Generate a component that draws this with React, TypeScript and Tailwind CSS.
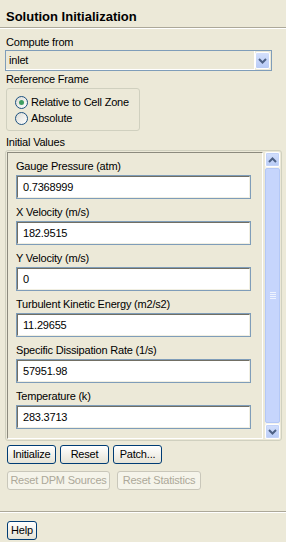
import React from 'react';

const fields = [
  { label: 'Gauge Pressure (atm)', value: '0.7368999' },
  { label: 'X Velocity (m/s)', value: '182.9515' },
  { label: 'Y Velocity (m/s)', value: '0' },
  { label: 'Turbulent Kinetic Energy (m2/s2)', value: '11.29655' },
  { label: 'Specific Dissipation Rate (1/s)', value: '57951.98' },
  { label: 'Temperature (k)', value: '283.3713' },
];

function Chevron({ up = false }: { up?: boolean }) {
  return (
    <svg width="9" height="6" viewBox="0 0 9 6">
      <path
        d={up ? 'M1 5 L4.5 1.5 L8 5' : 'M1 1 L4.5 4.5 L8 1'}
        fill="none"
        stroke="#4d6185"
        strokeWidth="2"
      />
    </svg>
  );
}

function ArrowButton({ up = false }: { up?: boolean }) {
  return (
    <div className="flex h-[15px] w-[15px] items-center justify-center rounded-[2px] border border-white bg-gradient-to-b from-[#d4e0fc] to-[#b8cbf6] shadow-[inset_0_0_0_1px_#c3d3f9]">
      <Chevron up={up} />
    </div>
  );
}

function Radio({ checked, label }: { checked: boolean; label: string }) {
  return (
    <div className="flex h-[16px] items-center">
      <div className="ml-[8px] flex h-[13px] w-[13px] items-center justify-center rounded-full border border-[#1c5180] bg-gradient-to-br from-[#dcdcd5] to-white">
        {checked && <div className="h-[5px] w-[5px] rounded-full bg-[#3f9e62]" />}
      </div>
      <span className="ml-[3px]">{label}</span>
    </div>
  );
}

function Button({ label, w, disabled = false }: { label: string; w: string; disabled?: boolean }) {
  return (
    <div
      className={
        disabled
          ? `flex h-[19px] ${w} items-center justify-center rounded-[3px] border border-[#c9c7ba] bg-[#f5f4ea] text-[#aca899]`
          : `flex h-[19px] ${w} items-center justify-center rounded-[3px] border border-[#003c74] bg-gradient-to-b from-white to-[#e6e3d6] text-black`
      }
    >
      {label}
    </div>
  );
}

export default function App() {
  return (
    <div
      className="flex h-[542px] w-[286px] flex-col bg-[#ece9d8] text-[11px] leading-[13px] tracking-[-0.2px] text-black"
      style={{ fontFamily: '"Liberation Sans", Arial, sans-serif' }}
    >
      <div className="h-[27px] pl-[6px] pt-[9px] text-[13px] font-bold leading-[16px] tracking-normal">Solution Initialization</div>
      <div className="h-[2px] border-t border-b border-t-[#aca899] border-b-white" />

      <div className="mt-[7px] pl-[6px]">Compute from</div>
      <div className="ml-[5px] mt-[1px] flex h-[21px] w-[267px] border border-[#7f9db9]">
        <div className="flex flex-1 items-center border-r border-b border-white pl-[3px]">inlet</div>
        <div className="flex items-center pr-[1px]">
          <div className="flex h-[17px] w-[15px] items-center justify-center rounded-[2px] border border-white bg-gradient-to-b from-[#d4e0fc] to-[#b8cbf6]">
            <Chevron />
          </div>
        </div>
      </div>

      <div className="mt-[2px] pl-[6px]">Reference Frame</div>
      <div className="ml-[6px] mt-[2px] h-[43px] w-[134px] rounded-[3px] border border-[#d0d0bf] pt-[5px]">
        <Radio checked label="Relative to Cell Zone" />
        <Radio checked={false} label="Absolute" />
      </div>

      <div className="mt-[5px] pl-[6px]">Initial Values</div>
      <div className="ml-[5px] mt-[1px] flex h-[291px] w-[277px] rounded-[3px] border border-[#d0d0bf] p-[1px]">
        <div className="flex w-[256px] flex-col border-t border-l border-r border-b border-t-[#8c8a7e] border-l-[#8c8a7e] border-r-white border-b-white pl-[8px] pt-[7px]">
          {fields.map((f) => (
            <div key={f.label} className="h-[46px]">
              <div>{f.label}</div>
              <div className="mt-[2px] h-[24px] w-[235px] border border-[#7f9db9]">
                <div className="flex h-full items-center border-t border-l border-r border-b border-t-[#716f64] border-l-[#716f64] border-r-[#f1efe2] border-b-[#f1efe2] bg-white pl-[5px]">
                  {f.value}
                </div>
              </div>
            </div>
          ))}
        </div>
        <div className="ml-[2px] flex w-[15px] flex-col bg-[#f4f3ee]">
          <ArrowButton up />
          <div className="my-[1px] flex flex-1 items-center justify-center rounded-[2px] border border-[#b4c8f6] bg-[#c6d5fc]">
            <div className="flex flex-col gap-[1px]">
              <div className="h-[1px] w-[6px] bg-[#eef3fe]" />
              <div className="h-[1px] w-[6px] bg-[#eef3fe]" />
              <div className="h-[1px] w-[6px] bg-[#eef3fe]" />
              <div className="h-[1px] w-[6px] bg-[#eef3fe]" />
            </div>
          </div>
          <ArrowButton />
        </div>
      </div>

      <div className="ml-[7px] mt-[4px] flex gap-[4px]">
        <Button label="Initialize" w="w-[49px]" />
        <Button label="Reset" w="w-[49px]" />
        <Button label="Patch..." w="w-[49px]" />
      </div>
      <div className="ml-[7px] mt-[7px] flex gap-[7px]">
        <Button label="Reset DPM Sources" w="w-[103px]" disabled />
        <Button label="Reset Statistics" w="w-[84px]" disabled />
      </div>

      <div className="mt-[21px] h-[2px] border-t border-b border-t-[#aca899] border-b-white" />
      <div className="ml-[7px] mt-[8px] flex">
        <Button label="Help" w="w-[30px]" />
      </div>
    </div>
  );
}
